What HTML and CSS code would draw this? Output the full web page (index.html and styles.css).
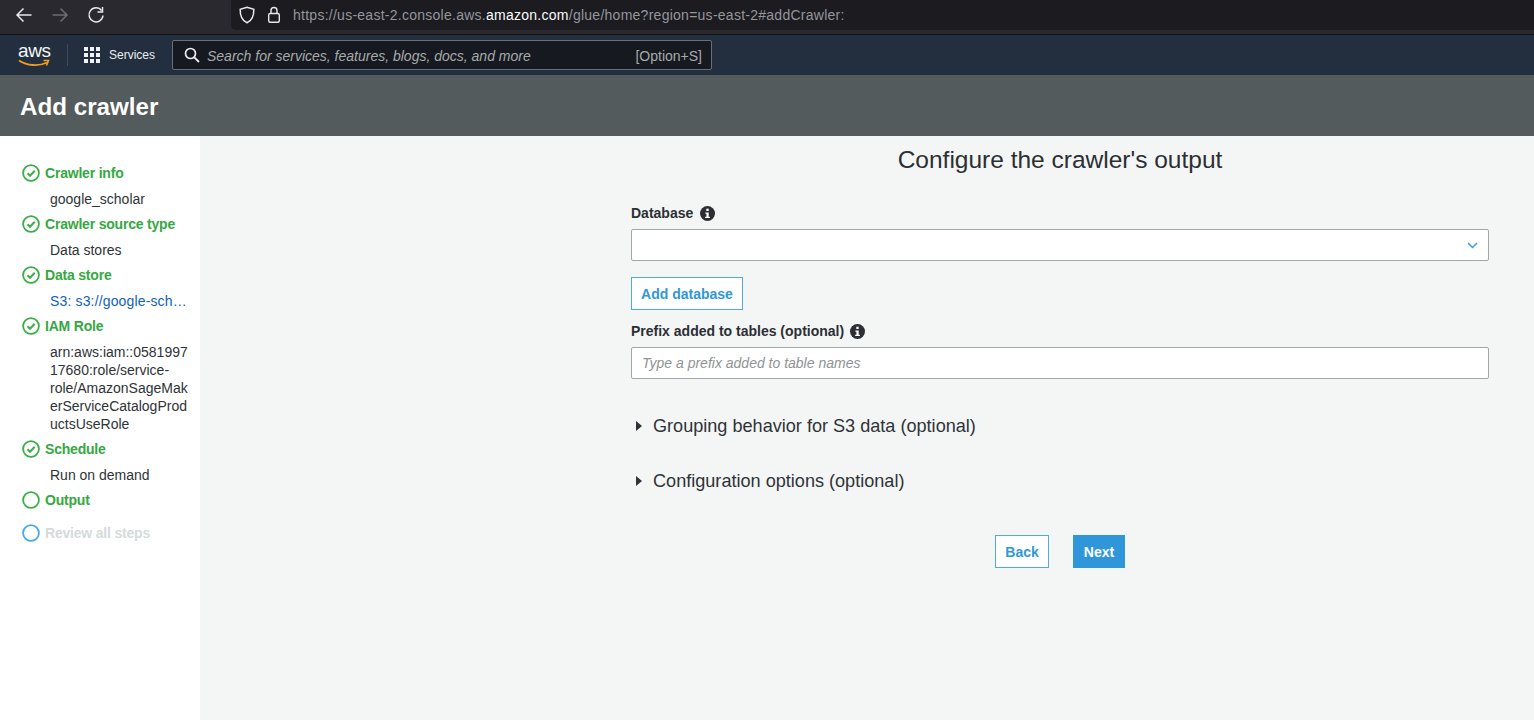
FILE: index.html
```html
<!DOCTYPE html>
<html lang="en">
<head>
<meta charset="utf-8">
<title>Add crawler</title>
<link rel="stylesheet" href="styles.css">
</head>
<body>
<div class="browser">
  <div class="browser-nav">
    <svg class="bicon" width="18" height="18" viewBox="0 0 18 18"><path d="M16.500 9H2M8.500 2.500 2 9l6.500 6.500" fill="none" stroke="#e8e8ea" stroke-width="1.500"/></svg>
    <svg class="bicon" width="18" height="18" viewBox="0 0 18 18"><path d="M1.500 9H16M9.500 2.500 16 9l-6.500 6.500" fill="none" stroke="#6d6d72" stroke-width="1.500"/></svg>
    <svg class="bicon" width="18" height="18" viewBox="0 0 18 18"><path d="M14.600 4.600A7 7 0 1 0 16 9.500" fill="none" stroke="#e8e8ea" stroke-width="1.500"/><path d="M15.500 1v5h-5" fill="none" stroke="#e8e8ea" stroke-width="1.500"/></svg>
  </div>
  <div class="urlbar">
    <svg width="16" height="18" viewBox="0 0 16 18"><path d="M8 1.200 14.800 3.200C15 9.500 13 14.500 8 16.800 3 14.500 1 9.500 1.200 3.200Z" fill="none" stroke="#e8e8ea" stroke-width="1.500"/></svg>
    <svg width="14" height="18" viewBox="0 0 14 18"><rect x="1.700" y="7.500" width="10.600" height="8.800" rx="1.500" fill="none" stroke="#e8e8ea" stroke-width="1.400"/><path d="M4 7.500V4.500a3 3 0 0 1 6 0v3" fill="none" stroke="#e8e8ea" stroke-width="1.400"/></svg>
    <span class="url">https://us-east-2.console.aws.<b>amazon.com</b>/glue/home?region=us-east-2#addCrawler:</span>
  </div>
</div>
<nav class="topnav">
  <div class="logo">
    <span class="logo-text">aws</span>
    <svg class="smile" width="32" height="9" viewBox="0 0 32 9"><path d="M1 1.500C9 7 21 7.500 29 3.500" fill="none" stroke="#f59b23" stroke-width="1.900"/><path d="M25.500 1.500 30.500 1.500 28.500 6.500" fill="none" stroke="#f59b23" stroke-width="1.600"/></svg>
  </div>
  <div class="divider"></div>
  <div class="grid-icon"><i></i><i></i><i></i><i></i><i></i><i></i><i></i><i></i><i></i></div>
  <span class="services">Services</span>
  <div class="search">
    <svg width="16" height="16" viewBox="0 0 16 16"><circle cx="6.500" cy="6.500" r="5" fill="none" stroke="#eceeee" stroke-width="1.700"/><path d="M10.300 10.300 15 15" stroke="#eceeee" stroke-width="1.900"/></svg>
    <span class="search-text">Search for services, features, blogs, docs, and more</span>
    <span class="shortcut">[Option+S]</span>
  </div>
</nav>
<header class="pagehead"><h1>Add crawler</h1></header>
<div class="content">
  <aside class="sidebar">
    <div class="step">
      <svg class="sicon" width="18" height="18" viewBox="0 0 18 18"><circle cx="9" cy="9" r="7.900" fill="none" stroke="#3cae47" stroke-width="1.800"/><path d="M5.500 9.200 8 11.700 12.700 6.800" fill="none" stroke="#3cae47" stroke-width="2"/></svg>
      <span>Crawler info</span>
    </div>
    <div class="detail">google_scholar</div>
    <div class="step">
      <svg class="sicon" width="18" height="18" viewBox="0 0 18 18"><circle cx="9" cy="9" r="7.900" fill="none" stroke="#3cae47" stroke-width="1.800"/><path d="M5.500 9.200 8 11.700 12.700 6.800" fill="none" stroke="#3cae47" stroke-width="2"/></svg>
      <span>Crawler source type</span>
    </div>
    <div class="detail">Data stores</div>
    <div class="step">
      <svg class="sicon" width="18" height="18" viewBox="0 0 18 18"><circle cx="9" cy="9" r="7.900" fill="none" stroke="#3cae47" stroke-width="1.800"/><path d="M5.500 9.200 8 11.700 12.700 6.800" fill="none" stroke="#3cae47" stroke-width="2"/></svg>
      <span>Data store</span>
    </div>
    <div class="detail link">S3: s3://google-sch…</div>
    <div class="step">
      <svg class="sicon" width="18" height="18" viewBox="0 0 18 18"><circle cx="9" cy="9" r="7.900" fill="none" stroke="#3cae47" stroke-width="1.800"/><path d="M5.500 9.200 8 11.700 12.700 6.800" fill="none" stroke="#3cae47" stroke-width="2"/></svg>
      <span>IAM Role</span>
    </div>
    <div class="detail arn">arn:aws:iam::0581997<br>17680:role/service-<br>role/AmazonSageMak<br>erServiceCatalogProd<br>uctsUseRole</div>
    <div class="step">
      <svg class="sicon" width="18" height="18" viewBox="0 0 18 18"><circle cx="9" cy="9" r="7.900" fill="none" stroke="#3cae47" stroke-width="1.800"/><path d="M5.500 9.200 8 11.700 12.700 6.800" fill="none" stroke="#3cae47" stroke-width="2"/></svg>
      <span>Schedule</span>
    </div>
    <div class="detail">Run on demand</div>
    <div class="step">
      <svg class="sicon" width="18" height="18" viewBox="0 0 18 18"><circle cx="9" cy="9" r="7.900" fill="none" stroke="#3cae47" stroke-width="1.800"/></svg>
      <span>Output</span>
    </div>
    <div class="step step-off">
      <svg class="sicon" width="18" height="18" viewBox="0 0 18 18"><circle cx="9" cy="9" r="7.900" fill="none" stroke="#4aa6e4" stroke-width="1.800"/></svg>
      <span>Review all steps</span>
    </div>
  </aside>
  <main class="main">
    <h2>Configure the crawler's output</h2>
    <div class="label label-db">Database
      <svg width="15" height="15" viewBox="0 0 14 14"><circle cx="7" cy="7" r="7" fill="#2b2f33"/><rect x="5.900" y="2.500" width="2.200" height="2.200" fill="#fff"/><path d="M5 6h3.100v4H9.200v1.300H4.800V10H6V7.200H5Z" fill="#fff"/></svg>
    </div>
    <div class="field select">
      <svg width="11" height="7" viewBox="0 0 11 7"><path d="M1 1 5.500 5.500 10 1" fill="none" stroke="#3a9fdc" stroke-width="1.500"/></svg>
    </div>
    <button class="btn btn-add">Add database</button>
    <div class="label label-prefix">Prefix added to tables (optional)
      <svg width="15" height="15" viewBox="0 0 14 14"><circle cx="7" cy="7" r="7" fill="#2b2f33"/><rect x="5.900" y="2.500" width="2.200" height="2.200" fill="#fff"/><path d="M5 6h3.100v4H9.200v1.300H4.800V10H6V7.200H5Z" fill="#fff"/></svg>
    </div>
    <div class="field prefix">Type a prefix added to table names</div>
    <div class="expander exp-first"><i class="caret"></i>Grouping behavior for S3 data (optional)</div>
    <div class="expander exp-second"><i class="caret"></i>Configuration options (optional)</div>
    <div class="actions">
      <button class="btn btn-back">Back</button>
      <button class="btn btn-next">Next</button>
    </div>
  </main>
</div>
</body>
</html>
```
FILE: styles.css
```css
* { box-sizing: border-box; }
html, body { margin: 0; height: 720px; overflow: hidden; }
body { font-family: "Liberation Sans", Arial, sans-serif; background: #f4f6f6; display: flex; flex-direction: column; }
.browser { height: 35px; background: #2a2930; border-bottom: 1px solid #121215; display: flex; flex: none; }
.browser-nav { width: 231px; display: flex; align-items: center; gap: 18px; padding: 0 0 5px 15px; }
.urlbar { flex: 1; height: 30px; background: #1b1b20; border-radius: 0 0 0 5px; display: flex; align-items: center; padding-left: 8px; gap: 11px; }
.urlbar svg:first-child { margin-right: 1px; }
.url { font-size: 14px; color: #96969b; margin-left: 1px; letter-spacing: .26px; }
.url b { font-weight: 400; color: #fbfbfe; }
.topnav { height: 40px; background: #232f3e; display: flex; align-items: center; flex: none; padding-left: 18px; }
.logo { width: 32px; height: 30px; position: relative; }
.logo-text { position: absolute; left: 0; top: 1px; font-size: 19px; line-height: 20px; color: #f4f6f6; letter-spacing: -.4px; }
.smile { position: absolute; left: 0; top: 19px; }
.divider { width: 1px; height: 22px; background: #3e4a58; margin-left: 17px; }
.grid-icon { width: 16px; height: 16px; margin-left: 16px; display: grid; grid-template-columns: repeat(3, 4px); grid-auto-rows: 4px; gap: 2px; }
.grid-icon i { background: #f2f3f3; }
.services { font-size: 12px; color: #eceeee; margin-left: 9px; width: 63px; }
.search { width: 540px; height: 30px; background: #16191f; border: 1px solid #687078; border-radius: 2px; display: flex; align-items: center; padding: 0 9px 0 11px; }
.search-text { font-size: 14px; font-style: italic; color: #a6abab; margin-left: 7px; flex: 1; padding-top: 1px; }
.shortcut { font-size: 14px; color: #a6abab; padding-top: 1px; }
.pagehead { height: 61px; background: #545b5d; flex: none; display: flex; align-items: center; padding: 2px 0 0 20px; }
.pagehead h1 { margin: 0; font-size: 24.200px; font-weight: 700; color: #fff; }
.content { flex: 1; display: flex; min-height: 0; }
.sidebar { width: 200px; background: #fff; padding: 26px 12px 0 22px; flex: none; }
.step { display: flex; align-items: center; height: 22px; font-size: 14px; letter-spacing: -.2px; font-weight: 700; color: #35a843; gap: 5px; }
.sicon { flex: none; }
.step-off { margin-top: 11px; color: #d5dbdb; }
.detail { font-size: 14px; line-height: 18px; color: #2f3337; padding-left: 28px; margin: 6px -6px 5px 0; height: 18px; white-space: nowrap; }
.link { color: #0f62bb; letter-spacing: .15px; }
.arn { height: 90px; }
.main { flex: 1; padding: 10px 45px 0 431px; min-width: 0; }
h2 { margin: 0; font-size: 24.500px; font-weight: 400; line-height: 28px; color: #2b2f33; text-align: center; }
.label { display: flex; align-items: center; font-size: 14px; font-weight: 700; color: #2b2f33; height: 18px; }
.label-db { margin-top: 30px; gap: 7px; }
.field { height: 32px; background: #fff; border: 1px solid #a1a6a6; border-radius: 2px; }
.select { margin-top: 7px; display: flex; align-items: center; justify-content: flex-end; padding-right: 10px; }
.btn { font-family: inherit; font-size: 14px; font-weight: 700; border-radius: 0; padding: 0; }
.btn-add { display: block; width: 112px; height: 33px; margin-top: 16px; background: #fff; border: 1px solid #4fa9e2; color: #2f97d9; }
.label-prefix { margin-top: 12px; gap: 6px; }
.prefix { margin-top: 7px; padding-left: 10px; font-size: 14px; line-height: 31px; font-style: italic; color: #8f9394; }
.expander { display: flex; align-items: center; font-size: 18.100px; line-height: 22px; color: #2f3337; }
.caret { width: 0; height: 0; border-left: 6px solid #2f3337; border-top: 5px solid transparent; border-bottom: 5px solid transparent; margin: 0 11px 0 5px; }
.exp-first { margin-top: 36px; }
.exp-second { margin-top: 33px; }
.actions { display: flex; justify-content: center; gap: 24px; margin-top: 43px; }
.btn-back { width: 54px; height: 33px; background: #fff; border: 1px solid #4fa9e2; color: #2f97d9; }
.btn-next { width: 52px; height: 33px; background: #2f97d9; border: 1px solid #2f97d9; color: #fff; }
```
